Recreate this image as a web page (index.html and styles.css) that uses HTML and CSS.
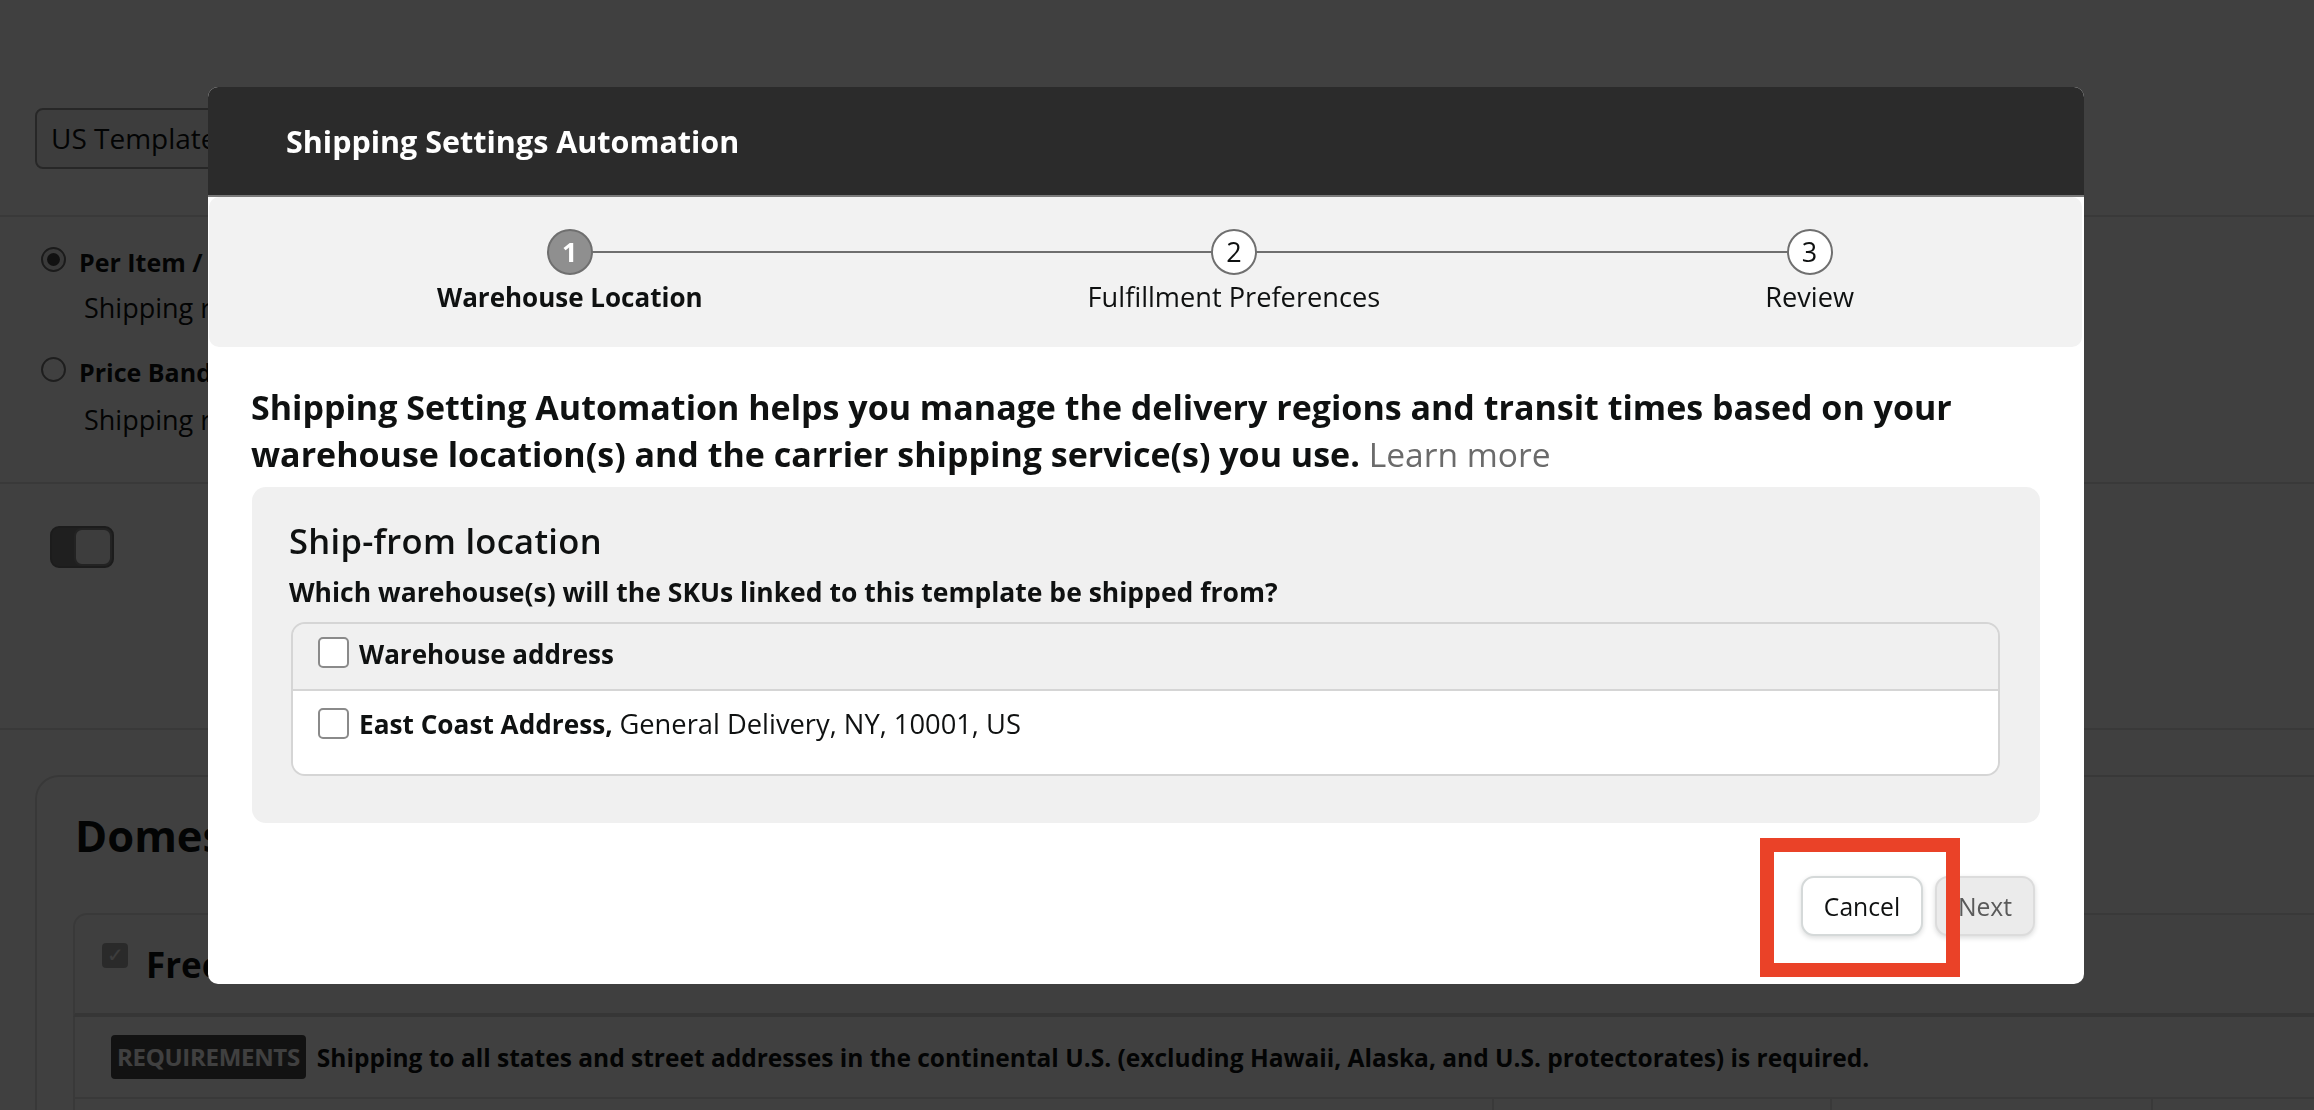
FILE: index.html
```html
<!DOCTYPE html>
<html lang="en">
<head>
<meta charset="utf-8">
<title>Shipping Settings</title>
<link rel="stylesheet" href="styles.css">
</head>
<body>
<main class="page">
  <div class="select-row">
    <div class="select">US Template</div>
  </div>
  <hr class="rule rule-a">
  <div class="options">
    <div class="option">
      <div class="option-head"><span class="radio radio-on"><span class="dot"></span></span><span class="option-title">Per Item / Weight-Based</span></div>
      <p class="option-sub">Shipping rates are based on the number of items or the weight of the order.</p>
    </div>
    <div class="option option-2">
      <div class="option-head"><span class="radio"></span><span class="option-title">Price Banded</span></div>
      <p class="option-sub">Shipping rates are based on the total price of the order.</p>
    </div>
  </div>
  <hr class="rule rule-b">
  <div class="toggle-row"><span class="toggle"><span class="knob"></span></span></div>
  <hr class="rule rule-c">
  <section class="card">
    <h2 class="card-title">Domestic</h2>
    <div class="region region-head">
      <span class="cb-checked">&#10003;</span><span class="region-title">Free Standard</span>
    </div>
    <div class="region region-req">
      <span class="badge">REQUIREMENTS</span><span class="req-text">Shipping to all states and street addresses in the continental U.S. (excluding Hawaii, Alaska, and U.S. protectorates) is required.</span>
    </div>
    <div class="region-table">
      <div class="col c1"></div><div class="col c2"></div><div class="col c3"></div><div class="col c4"></div>
    </div>
  </section>
</main>

<div class="overlay"></div>

<div class="modal" role="dialog" aria-labelledby="mtitle">
  <header class="modal-header"><h1 id="mtitle" class="modal-title">Shipping Settings Automation</h1></header>
  <div class="stepper">
    <div class="step-line"></div>
    <div class="step step-active"><span class="circle">1</span><span class="step-label">Warehouse Location</span></div>
    <div class="step"><span class="circle">2</span><span class="step-label">Fulfillment Preferences</span></div>
    <div class="step"><span class="circle">3</span><span class="step-label">Review</span></div>
  </div>
  <div class="modal-body">
    <p class="intro">Shipping Setting Automation helps you manage the delivery regions and transit times based on your warehouse location(s) and the carrier shipping service(s) you use. <a class="learn" href="#">Learn more</a></p>
    <div class="panel">
      <h3 class="panel-title">Ship-from location</h3>
      <p class="panel-q">Which warehouse(s) will the SKUs linked to this template be shipped from?</p>
      <div class="wtable">
        <label class="wrow wrow-head"><span class="cb"></span><span class="wlabel">Warehouse address</span></label>
        <label class="wrow wrow-body"><span class="cb"></span><span class="wtext"><b>East Coast Address,</b> <span class="addr">General Delivery, NY, 10001, US</span></span></label>
      </div>
    </div>
  </div>
  <footer class="modal-footer">
    <button class="btn btn-cancel">Cancel</button>
    <button class="btn btn-next" disabled>Next</button>
  </footer>
</div>

<div class="annot"></div>
</body>
</html>
```
FILE: styles.css
```css
html, body {
  margin: 0;
  padding: 0;
  overflow: hidden;
  width: 2314px;
  height: 1110px;
  background: #ffffff;
  font-family: "Open Sans", "Noto Sans", sans-serif;
  color: #0f1111;
}

/* ---------- underlying page ---------- */
.page {
  position: relative;
  padding-top: 108px;
}
.select-row {
  padding-left: 35px;
}
.select {
  box-sizing: border-box;
  width: 430px;
  height: 61px;
  border: 2px solid #9a9a9a;
  border-radius: 8px;
  padding-left: 14px;
  font-size: 28px;
  line-height: 57px;
  background: #f4f4f4;
}
.rule {
  border: 0;
  height: 2px;
  background: #e3e3e3;
  margin: 0;
}
.rule-a { margin-top: 46px; }
.options { padding-left: 41px; padding-top: 28px; }
.option-head {
  display: flex;
  align-items: flex-start;
  height: 34px;
}
.radio {
  box-sizing: border-box;
  width: 25px;
  height: 25px;
  border: 2px solid #7a7a7a;
  border-radius: 50%;
  margin-top: 2px;
  margin-right: 13px;
  display: flex;
  align-items: center;
  justify-content: center;
  background: #fff;
}
.radio-on { border-color: #6c6c6c; background: #e8e8e8; }
.radio-on .dot { width: 13px; height: 13px; border-radius: 50%; background: #444; }
.option-title {
  font-weight: 700;
  font-size: 25px;
  line-height: 34px;
}
.option-sub {
  margin: 11px 0 0 43px;
  font-size: 27px;
  line-height: 36px;
}
.option-2 { margin-top: 29px; }
.option-2 .option-sub { margin-top: 13px; }
.rule-b { margin-top: 44px; }
.toggle-row { padding: 42px 0 0 50px; height: 42px; }
.toggle {
  display: flex;
  box-sizing: border-box;
  width: 64px;
  height: 42px;
  border-radius: 9px;
  background: #7c7c7c;
  border: 2px solid #707070;
  justify-content: flex-end;
}
.knob {
  box-sizing: border-box;
  width: 38px;
  height: 38px;
  border-radius: 8px;
  background: #f3f3f3;
  border: 2px solid #8a8a8a;
}
.rule-c { margin-top: 160px; }
.card {
  margin: 45px 0 0 35px;
  border: 2px solid #dfdfdf;
  border-right: 0;
  border-radius: 24px 0 0 24px;
  padding: 31px 0 0 36px;
}
.card-title {
  margin: 0 0 49px 2px;
  font-size: 43.5px;
  line-height: 56px;
  font-weight: 700;
}
.region {
  display: flex;
  align-items: flex-start;
  border: 2px solid #e3e3e3;
  border-right: 0;
}
.region-head {
  border-radius: 14px 0 0 0;
  padding: 27px 27px 25px;
  height: 46px;
  background: #fbfbfb;
  border-bottom-width: 4px;
  border-bottom-color: #d8d8d8;
}
.cb-checked {
  box-sizing: border-box;
  width: 26px;
  height: 25px;
  margin-top: 1px;
  border-radius: 4px;
  background: #a9a9a9;
  color: #f2f2f2;
  font-size: 20px;
  line-height: 24px;
  text-align: center;
  margin-right: 18px;
}
.region-title {
  font-weight: 700;
  font-size: 35px;
  line-height: 46px;
}
.region-req {
  border-top: 0;
  padding: 17px 0 17px 36px;
  height: 46px;
  align-items: center;
}
.badge {
  background: #484848;
  color: #ffffff;
  font-weight: 700;
  font-size: 24px;
  line-height: 44px;
  padding: 0 6px;
  border-radius: 4px;
  margin-right: 11px;
  letter-spacing: -0.3px;
}
.req-text {
  font-weight: 700;
  font-size: 24.5px;
}
.region-table {
  display: grid;
  grid-template-columns: 1419px 338px 321px 1fr;
  height: 60px;
  border-left: 2px solid #e3e3e3;
}
.col { border-right: 2px solid #e3e3e3; }
.col.c4 { border-right: 0; }

/* ---------- overlay ---------- */
.overlay {
  position: fixed;
  inset: 0;
  background: rgba(0, 0, 0, 0.749);
}

/* ---------- modal ---------- */
.modal {
  position: fixed;
  left: 208px;
  top: 87px;
  width: 1876px;
  background: #ffffff;
  border-radius: 10px;
  overflow: hidden;
}
.modal-header {
  background: #2b2b2b;
  padding: 34px 0 0 78px;
  border-bottom: 2px solid #7a7a7a;
  height: 74px;
}
.modal-title {
  margin: 0;
  color: #ffffff;
  font-size: 30.5px;
  line-height: 40px;
  font-weight: 700;
}
.stepper {
  position: relative;
  display: flex;
  justify-content: space-between;
  margin: 0 2px 0 1px;
  padding: 32px 228px 33px;
  background: #f2f2f2;
  border-radius: 10px;
}
.step-line {
  position: absolute;
  left: 361px;
  right: 274px;
  top: 54px;
  height: 2px;
  background: #6f6f6f;
}
.step {
  position: relative;
  display: flex;
  flex-direction: column;
  align-items: center;
}
.circle {
  box-sizing: border-box;
  width: 46px;
  height: 46px;
  border-radius: 50%;
  border: 2px solid #6f6f6f;
  background: #ffffff;
  color: #0f1111;
  font-size: 27px;
  line-height: 42px;
  text-align: center;
}
.step-active .circle {
  background: #8f8f8f;
  color: #ffffff;
  font-weight: 700;
}
.step-label {
  margin-top: 5px;
  font-size: 27.2px;
  line-height: 34px;
  white-space: nowrap;
}
.step-active .step-label {
  font-weight: 700;
  font-size: 26px;
}
.modal-body {
  padding: 37px 44px 0 43px;
}
.intro {
  margin: 0 0 9px;
  font-size: 34px;
  line-height: 47px;
  font-weight: 700;
}
.learn {
  font-weight: 400;
  font-size: 33.6px;
  color: #6b6b6b;
  text-decoration: none;
}
.panel {
  margin-left: 1px;
  background: #f0f0f0;
  border-radius: 14px;
  padding: 32px 40px 47px 37px;
}
.panel-title {
  margin: 0;
  font-size: 34.5px;
  line-height: 44px;
  font-weight: 600;
  letter-spacing: 0.3px;
}
.panel-q {
  margin: 12px 0 13px;
  font-size: 26.5px;
  line-height: 34px;
  font-weight: 700;
}
.wtable {
  margin-left: 2px;
  border: 2px solid #d5d5d5;
  border-radius: 14px;
  overflow: hidden;
}
.wrow {
  display: flex;
  align-items: flex-start;
  padding-left: 25px;
}
.wrow-head {
  padding-top: 13px;
  padding-bottom: 18px;
  background: #f0f0f0;
  border-bottom: 2px solid #d5d5d5;
}
.wrow-body {
  padding-top: 16px;
  padding-bottom: 33px;
  background: #ffffff;
}
.cb {
  box-sizing: border-box;
  flex: none;
  width: 31px;
  height: 31px;
  border: 2px solid #8a8a8a;
  border-radius: 5px;
  background: #ffffff;
  margin-right: 10px;
}
.wrow-body .cb { margin-top: 1px; }
.wlabel, .wtext {
  font-size: 26px;
  line-height: 34px;
  font-weight: 700;
}
.wtext b { font-weight: 700; font-size: 26.2px; }
.addr { font-weight: 400; font-size: 27.3px; }
.modal-footer {
  display: flex;
  justify-content: flex-end;
  gap: 12px;
  padding: 53px 49px 48px 0;
}
.btn {
  box-sizing: border-box;
  height: 60px;
  border-radius: 13px;
  font-family: "Open Sans", "Noto Sans", sans-serif;
  font-size: 24.7px;
  padding: 0;
  box-shadow: 0 2px 5px rgba(15, 17, 17, 0.15);
}
.btn-cancel {
  width: 122px;
  background: #ffffff;
  border: 2px solid #d5d9d9;
  color: #0f1111;
}
.btn-next {
  width: 100px;
  background: #ebebeb;
  border: 2px solid #dcdcdc;
  color: #5a5a5a;
}

/* ---------- annotation ---------- */
.annot {
  position: fixed;
  left: 1760px;
  top: 838px;
  width: 200px;
  height: 139px;
  box-sizing: border-box;
  border: 14.5px solid #ea4228;
}
```
